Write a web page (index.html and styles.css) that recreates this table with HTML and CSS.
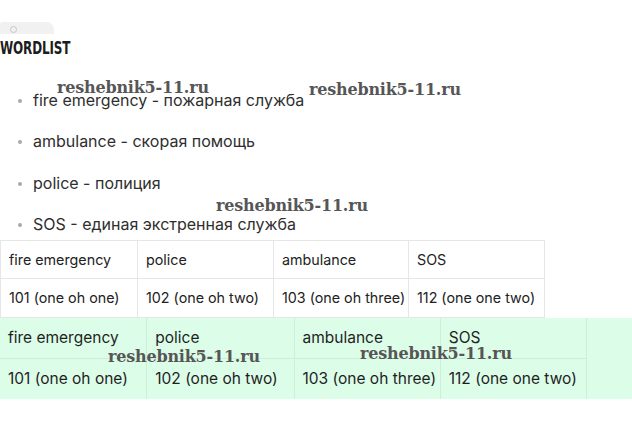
FILE: index.html
```html
<!DOCTYPE html>
<html>
<head>
<meta charset="utf-8">
<link rel="stylesheet" href="styles.css">
</head>
<body>
<div class="page">
  <div class="topbar"><span class="pill"><span class="pill-dot"></span></span></div>
  <h2 class="title"><span class="title-text">WORDLIST</span></h2>
  <ul class="words">
    <li>fire emergency - пожарная служба</li>
    <li>ambulance - скорая помощь</li>
    <li>police - полиция</li>
    <li>SOS - единая экстренная служба</li>
  </ul>
  <table class="grid plain">
    <tr><td class="c1">fire emergency</td><td class="c2">police</td><td class="c3">ambulance</td><td class="c4">SOS</td></tr>
    <tr><td>101 (one oh one)</td><td>102 (one oh two)</td><td>103 (one oh three)</td><td>112 (one one two)</td></tr>
  </table>
  <div class="mint">
    <table class="grid green">
      <tr><td class="g1">fire emergency</td><td class="g2">police</td><td class="g3">ambulance</td><td class="g4">SOS</td></tr>
      <tr><td>101 (one oh one)</td><td>102 (one oh two)</td><td>103 (one oh three)</td><td>112 (one one two)</td></tr>
    </table>
  </div>
  <span class="wm wm1">reshebnik5-11.ru</span>
  <span class="wm wm2">reshebnik5-11.ru</span>
  <span class="wm wm3">reshebnik5-11.ru</span>
  <span class="wm wm4">reshebnik5-11.ru</span>
  <span class="wm wm5">reshebnik5-11.ru</span>
</div>
</body>
</html>
```
FILE: styles.css
```css
html, body { margin: 0; padding: 0; background: #fff; }
body { font-family: Inter, "Noto Sans", sans-serif; color: #2a2a2a; }
.page { position: relative; width: 632px; height: 431px; overflow: hidden; }

.topbar { height: 34px; display: flex; align-items: flex-end; }
.pill { display: block; width: 58px; height: 12px; margin-left: -4px; background: #f1f1f1; border-radius: 8px 8px 0 0; position: relative; }
.pill-dot { position: absolute; left: 14px; top: 4px; width: 5px; height: 5px; border-radius: 50%; border: 1px solid #c8c8c8; }

.title { margin: 0; height: 26px; padding-top: 5px; font-family: "DejaVu Sans Condensed", "DejaVu Sans", sans-serif; font-weight: bold; font-size: 17.5px; line-height: 18px; color: #1c1c1c; box-sizing: border-box; }
.title-text { display: inline-block; transform: scaleX(0.76); transform-origin: left center; letter-spacing: -0.2px; }

.words { list-style: none; margin: 29px 0 0 0; padding: 0 0 0 33px; font-size: 16px; line-height: 22px; color: #2e2e2e; }
.words li { position: relative; height: 22px; margin-bottom: 19.3px; }
.words li:last-child { margin-bottom: 0; }
.words li::before { content: ""; position: absolute; left: -15px; top: 10px; width: 4px; height: 4px; border-radius: 50%; background: #a9a9a9; }

.grid { border-collapse: collapse; table-layout: fixed; }
.plain { margin-top: 5px; width: 545px; font-size: 14.3px; color: #222; }
.plain td { border: 1px solid #e6e6e6; padding: 0 0 0 8px; height: 37px; white-space: nowrap; }
.plain tr:last-child td { height: 38px; }
.c1 { width: 128px; } .c2 { width: 127px; } .c3 { width: 126px; } .c4 { width: 127px; }

.mint { background: #dcfde8; height: 81px; }
.green { width: 587px; font-size: 15.5px; color: #1f1f1f; }
.green td { border: 1px solid #cdefda; border-top: none; padding: 0 0 0 8px; height: 40px; white-space: nowrap; }
.green td:first-child { border-left: none; }
.green tr:last-child td { border-bottom: none; }
.g1 { width: 138px; } .g2 { width: 138px; } .g3 { width: 137px; } .g4 { width: 137px; }

.wm { position: absolute; font-family: "DejaVu Serif", serif; font-weight: bold; font-size: 16px; line-height: 18px; color: #565656; letter-spacing: -0.2px; white-space: nowrap; }
.wm1 { left: 57px; top: 79px; }
.wm2 { left: 309px; top: 81px; }
.wm3 { left: 216px; top: 197px; }
.wm4 { left: 108px; top: 348px; }
.wm5 { left: 360px; top: 345px; }
```
